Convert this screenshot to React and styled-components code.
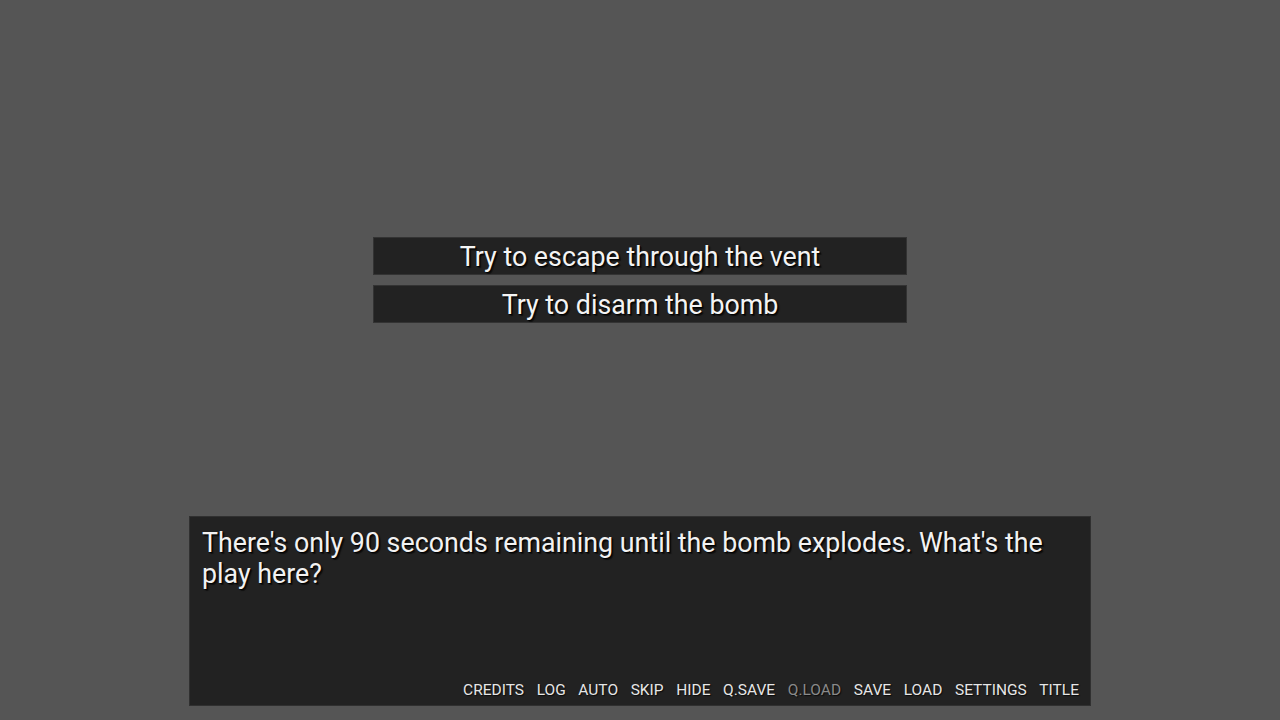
import React from "react";
import styled, { createGlobalStyle } from "styled-components";

const Global = createGlobalStyle`
  html, body { margin: 0; padding: 0; background: #555555; }
  body { font-family: Roboto, "Noto Sans", "Liberation Sans", sans-serif; }
`;

const Screen = styled.div`
  width: 1280px;
  height: 720px;
  display: flex;
  flex-direction: column;
  align-items: center;
  box-sizing: border-box;
  padding-top: 237px;
  padding-bottom: 14px;
  overflow: hidden;
`;

const Choices = styled.div`
  display: flex;
  flex-direction: column;
  gap: 10px;
  width: 534px;
`;

const Choice = styled.button`
  height: 38px;
  box-sizing: border-box;
  background: #222222;
  border: 1px solid #333333;
  color: #f4f4f4;
  font-family: Roboto, "Noto Sans", sans-serif;
  font-size: 26.8px;
  line-height: 36px;
  padding: 1px 0 0 0;
  text-align: center;
  text-shadow: 1px 1px 1px #000, 2px 2px 1px rgba(0,0,0,0.5);
  cursor: pointer;
`;

const Spacer = styled.div`
  flex: 1;
`;

const TextBox = styled.div`
  width: 902px;
  height: 190px;
  box-sizing: border-box;
  background: #222222;
  border: 1px solid #303030;
  padding: 11px 11px 0 12px;
  display: flex;
  flex-direction: column;
`;

const Dialogue = styled.p`
  margin: 0;
  flex: 1;
  color: #f2f2f2;
  font-size: 26.8px;
  line-height: 31px;
  text-shadow: 1px 1px 1px #000, 2px 2px 1px rgba(0,0,0,0.5);
`;

const Menu = styled.nav`
  display: flex;
  justify-content: flex-end;
  gap: 12.6px;
  height: 30px;
  align-items: center;
`;

const MenuItem = styled.span`
  font-size: 15.5px;
  color: ${(p) => (p.$disabled ? "#8a8a8a" : "#e6e6e6")};
  text-shadow: 1px 1px 1px rgba(0,0,0,0.7);
`;

const items = ["CREDITS", "LOG", "AUTO", "SKIP", "HIDE", "Q.SAVE", "Q.LOAD", "SAVE", "LOAD", "SETTINGS", "TITLE"];

export default function App() {
  return (
    <>
      <Global />
      <Screen>
        <Choices>
          <Choice>Try to escape through the vent</Choice>
          <Choice>Try to disarm the bomb</Choice>
        </Choices>
        <Spacer />
        <TextBox>
          <Dialogue>
            There's only 90 seconds remaining until the bomb explodes. What's the play here?
          </Dialogue>
          <Menu>
            {items.map((it) => (
              <MenuItem key={it} $disabled={it === "Q.LOAD"}>{it}</MenuItem>
            ))}
          </Menu>
        </TextBox>
      </Screen>
    </>
  );
}
